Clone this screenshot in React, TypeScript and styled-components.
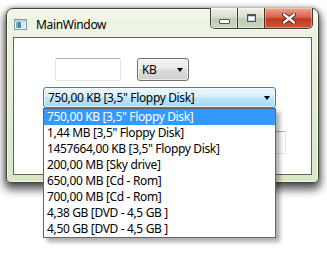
import React from "react";
import styled, { createGlobalStyle } from "styled-components";

const GlobalStyle = createGlobalStyle`
  html, body {
    margin: 0;
    padding: 0;
    background: #ffffff;
  }
  body {
    font-family: "Noto Sans", "Open Sans", sans-serif;
    font-size: 12px;
    letter-spacing: -0.35px;
    color: #000;
  }
`;

const Page = styled.div`
  padding: 8px 0 0 6px;
  width: 327px;
  height: 253px;
  box-sizing: border-box;
`;

const Window = styled.div`
  width: 313px;
  height: 175px;
  box-sizing: border-box;
  border: 1px solid #3f453a;
  border-radius: 7px 7px 5px 5px;
  background: linear-gradient(180deg, #f1f6e8 0%, #e5efd6 35%, #d9e7c5 100%);
  box-shadow: inset 0 0 0 1px rgba(255, 255, 255, 0.75),
    0 5px 9px 2px rgba(0, 0, 0, 0.62), 0 0 4px rgba(0, 0, 0, 0.35);
  padding: 0 6px 7px 6px;
  display: flex;
  flex-direction: column;
`;

const TitleBar = styled.div`
  height: 28px;
  display: flex;
  align-items: flex-start;
`;

const TitleGroup = styled.div`
  display: flex;
  align-items: center;
  gap: 9px;
  margin: 8px 0 0 1px;
  height: 15px;
`;

const Title = styled.span`
  font-size: 12px;
  line-height: 15px;
  color: #000;
`;

const CaptionButtons = styled.div`
  margin: -1px -1px 0 auto;
  display: flex;
  height: 20px;
  border: 1px solid #3a4234;
  border-top: none;
  border-radius: 0 0 5px 5px;
  overflow: hidden;
  box-shadow: 0 1px 0 rgba(255, 255, 255, 0.85);
`;

const CaptionButton = styled.div<{ $close?: boolean }>`
  width: ${(p) => (p.$close ? "47px" : "26px")};
  display: flex;
  align-items: center;
  justify-content: center;
  & + & {
    border-left: 1px solid ${(p) => (p.$close ? "#5e2a20" : "#7f8a76")};
  }
  box-shadow: inset 0 0 0 1px rgba(255, 255, 255, 0.35);
  background: ${(p) =>
    p.$close
      ? "linear-gradient(180deg, #eba592 0%, #d8644c 45%, #c23a22 55%, #d0553a 100%)"
      : "linear-gradient(180deg, #edf2e5 0%, #d7e0cc 45%, #bfcab3 55%, #cdd8c0 100%)"};
`;

const MinGlyph = styled.div`
  width: 9px;
  height: 3px;
  margin-top: 6px;
  background: #fff;
  border: 1px solid #4a5360;
  border-radius: 1px;
`;

const MaxGlyph = styled.div`
  width: 7px;
  height: 5px;
  margin-top: -1px;
  background: #fff;
  border: 1px solid #4a5360;
  border-top-width: 2px;
  box-shadow: inset 0 0 0 1px #c9d0d8;
`;

const Client = styled.div`
  flex: 1;
  background: #ffffff;
  border: 1px solid #5d6854;
  position: relative;
`;

const Row = styled.div<{ $top: number; $left: number }>`
  display: flex;
  align-items: center;
  gap: 16px;
  margin-top: ${(p) => p.$top}px;
  padding-left: ${(p) => p.$left}px;
`;

const TextBox = styled.div<{ $width: number }>`
  width: ${(p) => p.$width}px;
  height: 23px;
  box-sizing: border-box;
  border: 1px solid #e2e3ea;
  border-top-color: #abadb3;
  border-bottom-color: #e3e9ef;
  border-radius: 2px;
  background: #fff;
`;

const ComboBox = styled.div<{ $width: number; $height: number; $open?: boolean }>`
  position: relative;
  width: ${(p) => p.$width}px;
  height: ${(p) => p.$height}px;
  box-sizing: border-box;
  display: flex;
  align-items: center;
  justify-content: space-between;
  padding: 0 5px 0 4px;
  border: 1px solid ${(p) => (p.$open ? "#3c7fb1" : "#707070")};
  border-radius: 3px;
  background: ${(p) =>
    p.$open
      ? "linear-gradient(180deg, #eaf6fd 0%, #d9f0fc 50%, #bee6fd 50%, #a7d9f5 100%)"
      : "linear-gradient(180deg, #f2f2f2 0%, #ebebeb 50%, #dddddd 50%, #cfcfcf 100%)"};
  box-shadow: inset 0 0 0 1px rgba(255, 255, 255, 0.6);
`;

const ComboText = styled.span`
  font-size: 12px;
  line-height: 15px;
  white-space: nowrap;
`;

const Arrow = styled.span`
  width: 0;
  height: 0;
  border-left: 3.5px solid transparent;
  border-right: 3.5px solid transparent;
  border-top: 4px solid #000;
  margin-top: 1px;
`;

const Popup = styled.div`
  position: absolute;
  left: -1px;
  top: calc(100% + 1px);
  width: 233px;
  box-sizing: border-box;
  background: #fff;
  border: 1px solid #646464;
  box-shadow: 4px 4px 4px rgba(0, 0, 0, 0.32);
  z-index: 10;
`;

const Item = styled.div<{ $selected?: boolean }>`
  height: 16px;
  line-height: 16px;
  padding-left: 3px;
  font-size: 12px;
  white-space: nowrap;
  background: ${(p) => (p.$selected ? "#3399ff" : "transparent")};
  color: ${(p) => (p.$selected ? "#fff" : "#000")};
`;

const WindowIcon = () => (
  <svg width="13" height="11" viewBox="0 0 13 11">
    <rect x="0.5" y="0.5" width="12" height="10" fill="#f4f6f8" stroke="#8a96a4" />
    <rect x="1" y="1" width="11" height="2" fill="#c9d3de" />
    <rect x="2" y="3" width="5" height="6" fill="#3e8fa5" />
    <rect x="2" y="3" width="2" height="6" fill="#6fb0c4" />
    <rect x="8" y="3" width="3" height="6" fill="#dde3ea" />
  </svg>
);

const CloseGlyph = () => (
  <svg width="14" height="11" viewBox="0 0 14 11">
    <path
      d="M2 1.5 L12 9.5 M12 1.5 L2 9.5"
      stroke="#5a1e14"
      strokeWidth="4.2"
      strokeLinecap="round"
    />
    <path
      d="M2 1.5 L12 9.5 M12 1.5 L2 9.5"
      stroke="#ffffff"
      strokeWidth="2.4"
      strokeLinecap="round"
    />
  </svg>
);

const SIZES = [
  '750,00 KB [3,5" Floppy Disk]',
  '1,44 MB [3,5" Floppy Disk]',
  '1457664,00 KB [3,5" Floppy Disk]',
  "200,00 MB [Sky drive]",
  "650,00 MB [Cd - Rom]",
  "700,00 MB [Cd - Rom]",
  "4,38 GB [DVD - 4,5 GB ]",
  "4,50 GB [DVD - 4,5 GB ]",
];

export default function App() {
  return (
    <>
      <GlobalStyle />
      <Page>
        <Window>
          <TitleBar>
            <TitleGroup>
              <WindowIcon />
              <Title>MainWindow</Title>
            </TitleGroup>
            <CaptionButtons>
              <CaptionButton>
                <MinGlyph />
              </CaptionButton>
              <CaptionButton>
                <MaxGlyph />
              </CaptionButton>
              <CaptionButton $close>
                <CloseGlyph />
              </CaptionButton>
            </CaptionButtons>
          </TitleBar>
          <Client>
            <Row $top={20} $left={41}>
              <TextBox $width={66} />
              <ComboBox $width={52} $height={23}>
                <ComboText>KB</ComboText>
                <Arrow />
              </ComboBox>
            </Row>
            <Row $top={6} $left={29}>
              <ComboBox $width={233} $height={21} $open>
                <ComboText>{SIZES[0]}</ComboText>
                <Arrow />
                <Popup>
                  {SIZES.map((s, i) => (
                    <Item key={s} $selected={i === 0}>
                      {s}
                    </Item>
                  ))}
                </Popup>
              </ComboBox>
            </Row>
            <Row $top={23} $left={152}>
              <TextBox $width={120} />
            </Row>
          </Client>
        </Window>
      </Page>
    </>
  );
}
